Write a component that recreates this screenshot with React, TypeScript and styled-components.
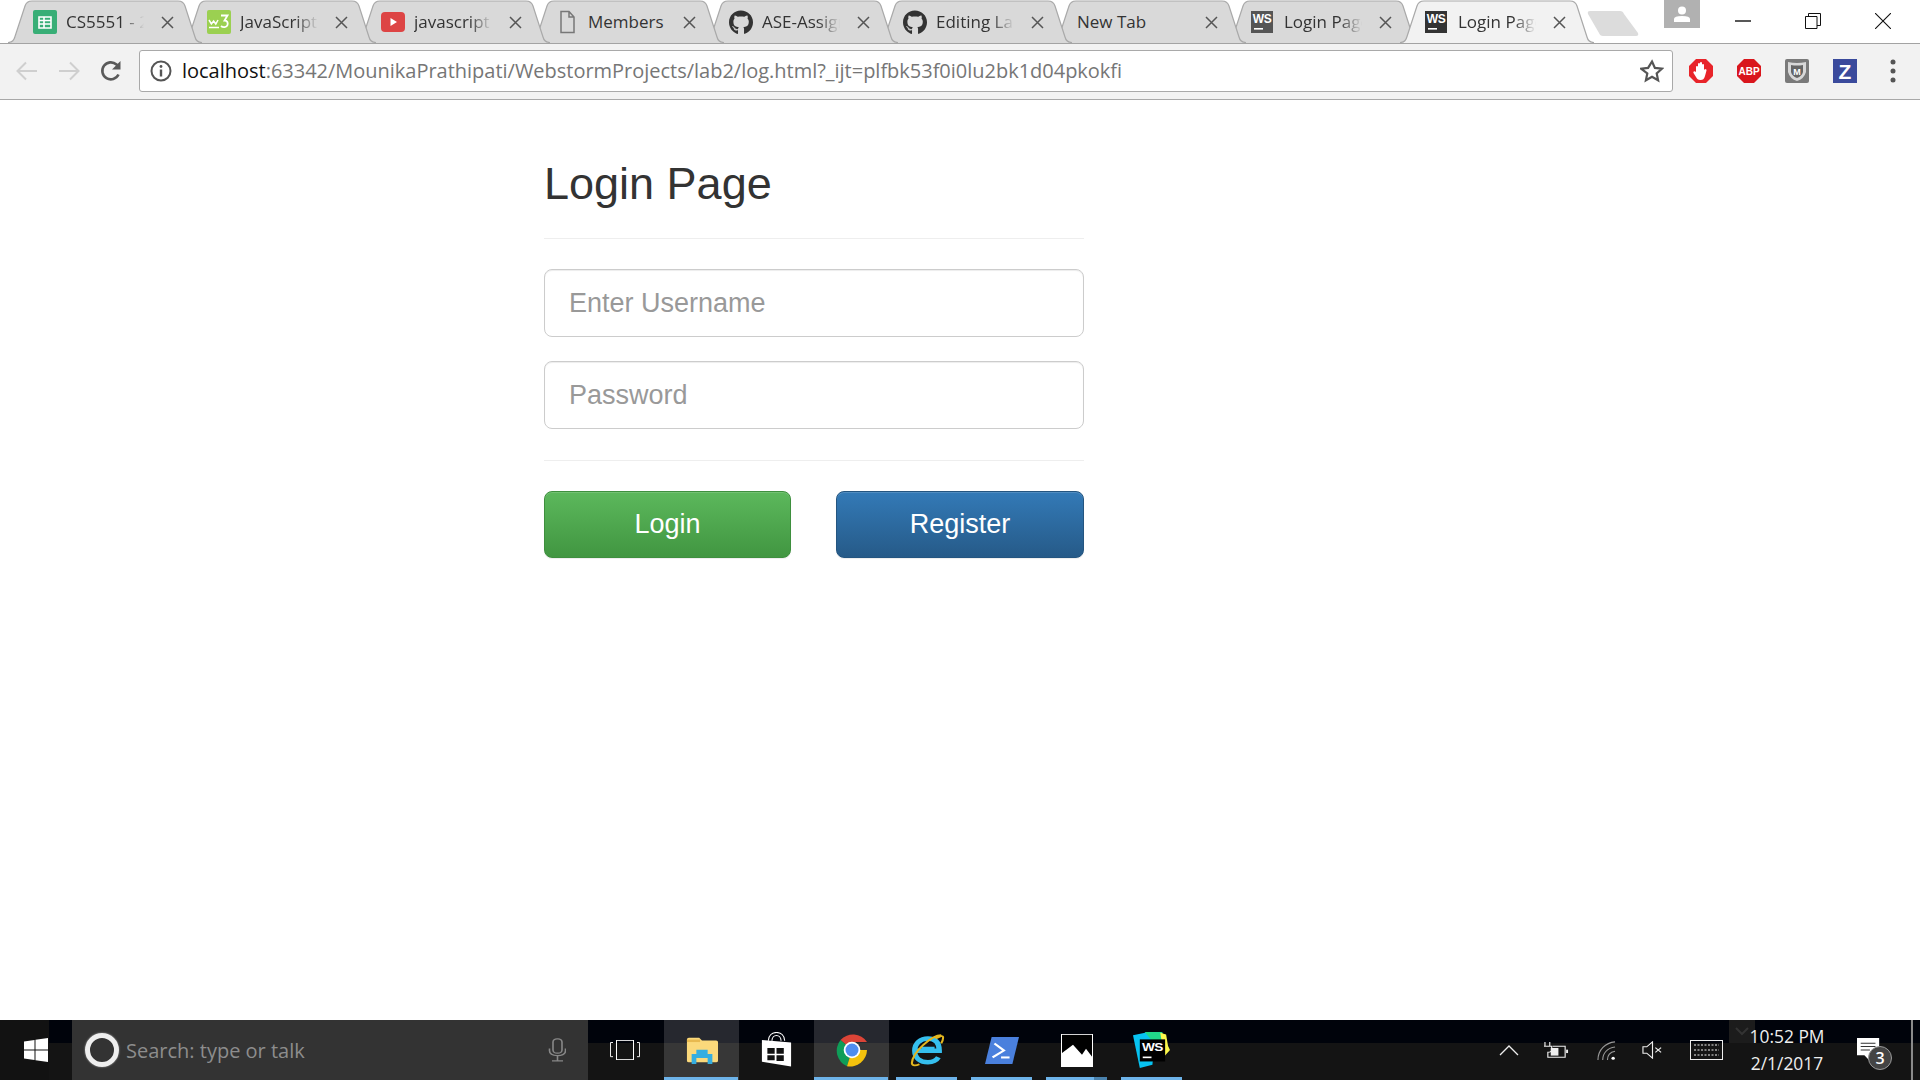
import React from 'react';
import styled, { createGlobalStyle } from 'styled-components';
import { FaGithub } from 'react-icons/fa';

const GlobalStyle = createGlobalStyle`
    html, body {
        margin: 0;
        padding: 0;
        background: #fff;
        overflow: hidden;
    }
    * { box-sizing: border-box; }
`;

const Screen = styled.div`
    width: 1920px;
    height: 1080px;
    display: flex;
    flex-direction: column;
    font-family: "Open Sans", "Liberation Sans", sans-serif;
`;

/* tab strip */

const TabStrip = styled.div`
    flex: 0 0 43px;
    display: flex;
    align-items: flex-start;
    padding-left: 8px;
    border-bottom: 1px solid #a3a3a3;
    background: #fff;
`;

const TabItem = styled.div<{ $order: number }>`
    position: relative;
    z-index: ${props => props.$order};
    flex: 0 0 174px;
    height: 43px;
    padding: 1px 0 0 25px;
    display: flex;
    align-items: center;
`;

const TabShape = styled.svg`
    position: absolute;
    left: 0;
    top: 0;
    z-index: -1;
`;

const Favicon = styled.span`
    flex: 0 0 24px;
    width: 24px;
    height: 24px;
    margin-right: 9px;
    display: flex;
    align-items: center;
`;

const TabTitle = styled.span<{ $fade?: boolean; $wide?: boolean }>`
    flex: 0 0 ${props => props.$wide ? '118px' : '85px'};
    margin-top: -2px;
    font-size: 17px;
    color: #333;
    white-space: nowrap;
    overflow: hidden;
    -webkit-mask-image: ${props => props.$fade ? 'linear-gradient(90deg, #000 65%, transparent 92%)' : 'none'};
    mask-image: ${props => props.$fade ? 'linear-gradient(90deg, #000 65%, transparent 92%)' : 'none'};
`;

const TabClose = styled.svg`
    flex: 0 0 13px;
    margin-left: 10px;
`;

const NewTabButton = styled.svg`
    flex: 0 0 52px;
    margin: 10px 0 0 13px;
`;

const ProfileBadge = styled.div`
    flex: 0 0 36px;
    height: 28px;
    margin-left: 25px;
    background: #b1b1b1;
    display: flex;
    align-items: center;
    justify-content: center;
`;

const WindowControls = styled.div`
    display: flex;
    margin-left: 8px;
`;

const WindowButton = styled.div`
    width: 70px;
    height: 42px;
    display: flex;
    align-items: center;
    justify-content: center;
`;

/* toolbar */

const Toolbar = styled.div`
    flex: 0 0 56px;
    display: flex;
    align-items: center;
    padding: 0 0 1px 6px;
    background: #f2f2f2;
    border-bottom: 1px solid #a8a8a8;
`;

const NavButton = styled.div`
    flex: 0 0 42px;
    display: flex;
    align-items: center;
    justify-content: center;
`;

const AddressBar = styled.div`
    flex: 0 0 1534px;
    height: 42px;
    margin-left: 7px;
    padding: 0 8px 0 10px;
    display: flex;
    align-items: center;
    background: #fff;
    border: 1px solid #a9a9a9;
    border-radius: 3px;
`;

const UrlText = styled.div`
    flex: 1;
    margin: -2px 0 0 10px;
    font-size: 20px;
    letter-spacing: -0.015px;
    color: #767676;
    white-space: nowrap;
`;

const UrlHost = styled.span`
    color: #111;
`;

const Extensions = styled.div`
    display: flex;
    margin-left: 4px;
`;

const ExtensionSlot = styled.div`
    width: 48px;
    display: flex;
    align-items: center;
    justify-content: center;
`;

/* login page */

const Main = styled.main`
    flex: 1;
    background: #fff;
`;

const LoginForm = styled.form`
    width: 540px;
    margin-left: 544px;
    font-family: "Liberation Sans", Arial, sans-serif;
`;

const Heading = styled.div`
    height: 139px;
    padding-top: 59px;
    border-bottom: 1px solid #eee;
`;

const Title = styled.h1`
    margin: 0;
    font-size: 45px;
    line-height: 50px;
    font-weight: 400;
    color: #333;
`;

const Fields = styled.div`
    display: flex;
    flex-direction: column;
    gap: 24px;
    padding: 30px 0 31px;
    border-bottom: 1px solid #eee;
`;

const TextInput = styled.input`
    width: 100%;
    height: 68px;
    padding: 0 24px;
    font-family: inherit;
    font-size: 27px;
    color: #555;
    background: #fff;
    border: 1px solid #ccc;
    border-radius: 8px;
    box-shadow: inset 0 1px 1px rgba(0, 0, 0, .075);

    &::placeholder {
        color: #999;
        opacity: 1;
    }
`;

const Actions = styled.div`
    display: flex;
    justify-content: space-between;
    padding-top: 30px;
`;

const ActionButton = styled.button<{ $kind: 'success' | 'primary' }>`
    width: ${props => props.$kind === 'success' ? '247px' : '248px'};
    height: 67px;
    font-family: inherit;
    font-size: 27px;
    color: #fff;
    border-radius: 8px;
    border: 1px solid ${props => props.$kind === 'success' ? '#3e8f3e' : '#245580'};
    background: ${props => props.$kind === 'success'
        ? 'linear-gradient(#5cb85c, #419641)'
        : 'linear-gradient(#337ab7, #265a88)'};
    box-shadow: inset 0 1px 0 rgba(255, 255, 255, .15), 0 1px 1px rgba(0, 0, 0, .075);
`;

/* taskbar */

const Taskbar = styled.footer`
    position: relative;
    flex: 0 0 60px;
    display: flex;
    align-items: center;
    background:
        linear-gradient(90deg, #121212 0 49px, transparent 49px),
        linear-gradient(#00030b 0 23px, #141414 23px);
`;

const StartButton = styled.div`
    flex: 0 0 72px;
    display: flex;
    justify-content: center;
`;

const SearchBox = styled.div`
    flex: 0 0 516px;
    height: 60px;
    padding: 0 22px 0 13px;
    display: flex;
    align-items: center;
    background: #333;
`;

const Cortana = styled.div`
    width: 34px;
    height: 34px;
    border: 5px solid #eee;
    border-radius: 50%;
    box-shadow: 0 0 2px #aaa;
`;

const SearchText = styled.div`
    flex: 1;
    margin-left: 7px;
    font-size: 20px;
    color: #8d8d8d;
`;

const TaskView = styled.div`
    flex: 0 0 76px;
    display: flex;
    justify-content: center;
    padding-right: 2px;
`;

const AppSlot = styled.div<{ $active?: boolean; $running?: boolean; $stacked?: boolean }>`
    position: relative;
    flex: 0 0 75px;
    height: 60px;
    display: flex;
    align-items: center;
    justify-content: center;
    background: ${props => props.$active ? 'rgba(255, 255, 255, .15)' : 'transparent'};

    &::after {
        content: '';
        display: ${props => props.$running ? 'block' : 'none'};
        position: absolute;
        bottom: 0;
        height: 3px;
        left: ${props => props.$active ? '0' : '7px'};
        right: ${props => props.$active ? '1px' : '7px'};
        background: ${props => props.$stacked
            ? 'linear-gradient(90deg, #6db3e9 78%, #4a82ad 78%)'
            : '#6db3e9'};
    }
`;

const Tray = styled.div`
    margin-left: auto;
    display: flex;
    align-items: center;
    height: 60px;
`;

const TraySlot = styled.div<{ $width: number }>`
    width: ${props => props.$width}px;
    display: flex;
    align-items: center;
    justify-content: center;
`;

const OverflowHint = styled.div`
    position: absolute;
    left: 1729px;
    top: 0;
    width: 26px;
    height: 23px;
    background: #1c1c1c;
    display: flex;
    align-items: center;
    justify-content: center;
`;

const Clock = styled.div`
    position: relative;
    z-index: 1;
    width: 86px;
    margin-left: 3px;
    display: flex;
    flex-direction: column;
    align-items: center;
    gap: 6px;
    font-size: 17.4px;
    line-height: 21px;
    color: #eee;
`;

const NotifyWrap = styled.div`
    position: relative;
    width: 78px;
    display: flex;
    justify-content: center;
`;

const NotifyBadge = styled.div`
    position: absolute;
    left: 38px;
    top: 8px;
    width: 24px;
    height: 24px;
    border-radius: 50%;
    background: #444;
    border: 1px solid #999;
    color: #fff;
    font-size: 16px;
    font-weight: 600;
    display: flex;
    align-items: center;
    justify-content: center;
`;

const ShowDesktop = styled.div`
    width: 2px;
    height: 60px;
    margin: 0 7px 0 3px;
    background: #8a8a8a;
`;

const SvgLabel = styled.text`
    font-family: "Liberation Sans", Arial, sans-serif;
    font-weight: 700;
`;

/* drawings */

const WsLogo: React.FC<{ bg?: string }> = ({ bg = '#333' }) => (
    <svg width="22" height="22" viewBox="0 0 22 22">
        <rect width="22" height="22" fill={bg}/>
        <SvgLabel x="11" y="12" fontSize="12" textAnchor="middle" fill="#fff" letterSpacing="-0.5">WS</SvgLabel>
        <rect x="3" y="17" width="9" height="1.600" fill="#fff"/>
    </svg>
);

const SheetsIcon = () => (
    <svg width="24" height="24" viewBox="0 0 24 24">
        <rect width="24" height="24" rx="2" fill="#38ae76"/>
        <path d="M6 7h12v11H6zM6 10.500h12M6 14h12M11 7v11" fill="none" stroke="#fff" strokeWidth="1.600"/>
    </svg>
);

const W3Icon = () => (
    <svg width="24" height="24" viewBox="0 0 24 24">
        <rect width="24" height="24" rx="2" fill="#9bd051"/>
        <path d="M2 10l2.400 4 2.200-3 2.200 3L11 10M2 17.500h10" fill="none" stroke="#fff" strokeWidth="1.500"/>
        <path d="M14 5.500h6.500l-3 5c3 0 3.600 2.500 3 4.500-.7 2.400-4.500 2.800-6.500 1" fill="none" stroke="#fff" strokeWidth="1.800"/>
    </svg>
);

const YoutubeIcon = () => (
    <svg width="24" height="24" viewBox="0 0 24 24">
        <rect y="2" width="24" height="20" rx="4" fill="#dd4444"/>
        <path d="M9.500 8l6.500 4-6.500 4z" fill="#fff"/>
    </svg>
);

const DocIcon = () => (
    <svg width="24" height="24" viewBox="0 0 24 24">
        <path d="M6 1.500h8l5 5.500v15.500H6z M14 1.500V7h5" fill="none" stroke="#777" strokeWidth="1.500"/>
    </svg>
);

const CloseGlyph = () => (
    <TabClose width="13" height="13" viewBox="0 0 13 13">
        <path d="M1 1l11 11M12 1L1 12" stroke="#555" strokeWidth="1.500"/>
    </TabClose>
);

const ChromeLogo = () => (
    <svg width="34" height="34" viewBox="0 0 34 34">
        <path d="M17 17L5.500 7A17 17 0 0 1 32 9H17z" fill="#db4437"/>
        <path d="M17 17L5.500 7A17 17 0 0 0 12 33.300z" fill="#0f9d58"/>
        <path d="M17 17h15A17 17 0 0 1 12 33.300z" fill="#f4c20d"/>
        <circle cx="17" cy="17" r="8.300" fill="#fff"/>
        <circle cx="17" cy="17" r="6.500" fill="#4f8df0"/>
    </svg>
);

const IeLogo = () => (
    <svg width="36" height="36" viewBox="0 0 38 44" preserveAspectRatio="none">
        <path d="M8 23h24c0-11-5-15-12-15-8 0-14 6-14 15s6 14 14 14c5 0 9-2 11-6" fill="none" stroke="#35bfee" strokeWidth="5.500"/>
        <path d="M13 19.500h14" stroke="#35bfee" strokeWidth="3"/>
        <path d="M34 4C24 4 4 24 3 38c0 4 5 3 8 1.500M28 8c4-2 8-5 8-1 0 2-1 5-2 7" fill="none" stroke="#e3b61f" strokeWidth="2.200"/>
    </svg>
);

const ExplorerLogo = () => (
    <svg width="32" height="27" viewBox="0 0 34 32" preserveAspectRatio="none">
        <path d="M1 3q0-2 2-2h11l3 3h15q2 0 2 2v22q0 2-2 2H3q-2 0-2-2z" fill="#fbd97b"/>
        <rect x="1" y="3" width="14" height="3" fill="#e8b94f"/>
        <path d="M6 32V20h5v-5h12v5h5v12h-5v-7H11v7z" fill="#35aee0"/>
    </svg>
);

const StoreLogo = () => (
    <svg width="31" height="37" viewBox="0 0 34 46" preserveAspectRatio="none">
        <path d="M8 11c0-14 18-14 18 0M12 11c0-9 10-9 10 0" fill="none" stroke="#fff" strokeWidth="1.200"/>
        <path d="M1 10l32 3v30l-32-6z" fill="#fff"/>
        <path d="M7 20h8v7H7zM17 20h8v7h-8zM7 29h8v6H7zM17 29h8v7h-8z" fill="#111"/>
    </svg>
);

const PowershellLogo = () => (
    <svg width="34" height="27" viewBox="0 0 36 33" preserveAspectRatio="none">
        <path d="M7 0h29l-7 33H0z" fill="#4a80dd"/>
        <path d="M10 8l10 8.500-12 8.500" fill="none" stroke="#fff" strokeWidth="2.500"/>
        <path d="M17 25h9" stroke="#fff" strokeWidth="2.500"/>
    </svg>
);

const PhotosLogo = () => (
    <svg width="32" height="33" viewBox="0 0 32 40" preserveAspectRatio="none">
        <rect x="0.500" y="0.500" width="31" height="39" fill="#000" stroke="#fff"/>
        <path d="M0 24l12-11 9 12 4-7 7 11v11H0z" fill="#fff"/>
    </svg>
);

const WebstormLogo = () => (
    <svg width="37" height="36" viewBox="0 0 38 44" preserveAspectRatio="none">
        <path d="M0 4l16-4 6 6-2 34-13 4z" fill="#07c3f2"/>
        <path d="M12 0h18l4 14-8 6z" fill="#21d789"/>
        <path d="M28 1l6 2 2 14 2 5-6 8z" fill="#fcf84a"/>
        <rect x="7" y="9" width="26" height="27" fill="#000"/>
        <SvgLabel x="20" y="23" fontSize="14" textAnchor="middle" fill="#fff" letterSpacing="-0.500">WS</SvgLabel>
        <rect x="10" y="30" width="9" height="2" fill="#fff"/>
    </svg>
);

type TabData = { title: string; icon: React.ReactNode; fade?: boolean };

const tabs: TabData[] = [
    { title: 'CS5551 - 2017', icon: <SheetsIcon/>, fade: true },
    { title: 'JavaScript tutorial', icon: <W3Icon/>, fade: true },
    { title: 'javascript tutorial', icon: <YoutubeIcon/>, fade: true },
    { title: 'Members', icon: <DocIcon/> },
    { title: 'ASE-Assignment', icon: <FaGithub size={25} color="#333"/>, fade: true },
    { title: 'Editing Lab', icon: <FaGithub size={25} color="#333"/>, fade: true },
    { title: 'New Tab', icon: null },
    { title: 'Login Page', icon: <WsLogo bg="#555"/>, fade: true },
    { title: 'Login Page', icon: <WsLogo/>, fade: true },
];

const Tab: React.FC<{ tab: TabData; index: number; active: boolean }> = ({ tab, index, active }) => (
    <TabItem $order={active ? 20 : 10 - index}>
        <TabShape width="194" height="43" viewBox="0 0 194 43">
            <path d="M0 43c4 0 6-2 7-6L17 6c1-3 3-5 7-5h146c4 0 6 2 7 5l10 31c1 4 3 6 7 6z"
                  fill={active ? '#f2f2f2' : '#d9d9d9'}/>
            <path d="M0 42.500c4 0 6-2 7-6L17 6c1-3 3-5 7-5h146c4 0 6 2 7 5l10 31c1 4 3 5.500 7 5.500"
                  fill="none" stroke="#a9a9a9" strokeWidth="1.200"/>
        </TabShape>
        {tab.icon ? <Favicon>{tab.icon}</Favicon> : null}
        <TabTitle $fade={tab.fade} $wide={!tab.icon}>{tab.title}</TabTitle>
        <CloseGlyph/>
    </TabItem>
);

export default function App() {
    return <Screen>
        <GlobalStyle/>
        <TabStrip>
            {tabs.map((tab, i) => <Tab key={i} tab={tab} index={i} active={i === tabs.length - 1}/>)}
            <NewTabButton width="52" height="26" viewBox="0 0 52 26">
                <path d="M3 1h30q3 0 4 3l14 19q1 3-2 3H16q-3 0-4-3L1 4q-1-3 2-3z" fill="#dcdcdc"/>
            </NewTabButton>
            <ProfileBadge>
                <svg width="18" height="16" viewBox="0 0 18 16">
                    <circle cx="9" cy="4.500" r="4" fill="#fff"/>
                    <path d="M1 16v-3q0-3 8-3t8 3v3z" fill="#fff"/>
                </svg>
            </ProfileBadge>
            <WindowControls>
                <WindowButton>
                    <svg width="16" height="2" viewBox="0 0 16 2"><path d="M0 1h16" stroke="#111" strokeWidth="1.400"/></svg>
                </WindowButton>
                <WindowButton>
                    <svg width="16" height="16" viewBox="0 0 16 16">
                        <path d="M.5 3.500h11.500v12H.5zM3.500 3.500V.5h12v12H12" fill="none" stroke="#111"/>
                    </svg>
                </WindowButton>
                <WindowButton>
                    <svg width="16" height="16" viewBox="0 0 16 16"><path d="M0 0l16 16M16 0L0 16" stroke="#111" strokeWidth="1.100"/></svg>
                </WindowButton>
            </WindowControls>
        </TabStrip>

        <Toolbar>
            <NavButton>
                <svg width="22" height="20" viewBox="0 0 22 20">
                    <path d="M21 10H2M10 1.500L1.500 10l8.500 8.500" fill="none" stroke="#cfcfcf" strokeWidth="2"/>
                </svg>
            </NavButton>
            <NavButton>
                <svg width="22" height="20" viewBox="0 0 22 20">
                    <path d="M1 10h19M12 1.500l8.500 8.500-8.500 8.500" fill="none" stroke="#cfcfcf" strokeWidth="2"/>
                </svg>
            </NavButton>
            <NavButton>
                <svg width="22" height="22" viewBox="0 0 22 22">
                    <path d="M18.500 14.500A8.500 8.500 0 1 1 16.500 4.500L19 7" fill="none" stroke="#5a5a5a" strokeWidth="2.600"/>
                    <path d="M20.500 1v8.500H12z" fill="#5a5a5a"/>
                </svg>
            </NavButton>
            <AddressBar>
                <svg width="22" height="22" viewBox="0 0 22 22">
                    <circle cx="11" cy="11" r="9.500" fill="none" stroke="#555" strokeWidth="2"/>
                    <path d="M11 9.500v7" stroke="#555" strokeWidth="2.400"/>
                    <circle cx="11" cy="6.500" r="1.400" fill="#555"/>
                </svg>
                <UrlText><UrlHost>localhost</UrlHost>:63342/MounikaPrathipati/WebstormProjects/lab2/log.html?_ijt=plfbk53f0i0lu2bk1d04pkokfi</UrlText>
                <svg width="24" height="24" viewBox="0 0 24 24">
                    <path d="M12 2.500l2.900 6.400 7 .8-5.200 4.700 1.400 6.900-6.100-3.500-6.100 3.500 1.400-6.900L1.100 9.700l7-.8z" fill="none" stroke="#555" strokeWidth="2.200"/>
                </svg>
            </AddressBar>
            <Extensions>
                <ExtensionSlot>
                    <svg width="24" height="24" viewBox="0 0 24 24">
                        <path d="M7 0h10l7 7v10l-7 7H7l-7-7V7z" fill="#e8242a"/>
                        <path d="M7 13V8a1 1 0 0 1 2 0v3V5a1 1 0 0 1 2 0v6V4a1 1 0 0 1 2 0v7V6a1 1 0 0 1 2 0v5l1-1q2 0 1.500 1.500L16 17c-1 3-2 4-4.500 4S8 20 7 18l-2.500-4c-.7-1.500 1-2.500 2.500-1z" fill="#fff"/>
                    </svg>
                </ExtensionSlot>
                <ExtensionSlot>
                    <svg width="24" height="24" viewBox="0 0 24 24">
                        <path d="M7 0h10l7 7v10l-7 7H7l-7-7V7z" fill="#d9161d"/>
                        <SvgLabel x="12" y="16" fontSize="10" textAnchor="middle" fill="#fff">ABP</SvgLabel>
                    </svg>
                </ExtensionSlot>
                <ExtensionSlot>
                    <svg width="24" height="24" viewBox="0 0 24 24">
                        <rect width="24" height="24" rx="2" fill="#7a7a7a"/>
                        <path d="M3 3q9 2 18 0v10q-2 7-9 9-7-2-9-9z" fill="#d8d8d8"/>
                        <path d="M6 6q6 1 12 0v7q-1 4-6 6-5-2-6-6z" fill="#666"/>
                        <SvgLabel x="12" y="15.500" fontSize="9" textAnchor="middle" fill="#fff">M</SvgLabel>
                    </svg>
                </ExtensionSlot>
                <ExtensionSlot>
                    <svg width="24" height="24" viewBox="0 0 24 24">
                        <rect width="24" height="24" fill="#3a4a9c"/>
                        <SvgLabel x="12" y="20" fontSize="21" textAnchor="middle" fill="#fff">Z</SvgLabel>
                    </svg>
                </ExtensionSlot>
                <ExtensionSlot>
                    <svg width="6" height="24" viewBox="0 0 6 24">
                        <circle cx="3" cy="3" r="2.500" fill="#555"/>
                        <circle cx="3" cy="12" r="2.500" fill="#555"/>
                        <circle cx="3" cy="21" r="2.500" fill="#555"/>
                    </svg>
                </ExtensionSlot>
            </Extensions>
        </Toolbar>

        <Main>
            <LoginForm>
                <Heading><Title>Login Page</Title></Heading>
                <Fields>
                    <TextInput type="text" placeholder="Enter Username"/>
                    <TextInput type="password" placeholder="Password"/>
                </Fields>
                <Actions>
                    <ActionButton type="button" $kind="success">Login</ActionButton>
                    <ActionButton type="button" $kind="primary">Register</ActionButton>
                </Actions>
            </LoginForm>
        </Main>

        <Taskbar>
            <StartButton>
                <svg width="24" height="24" viewBox="0 0 24 24">
                    <path d="M0 3.500l10.500-1.500v9.500H0zM11.500 1.800L24 0v11.500H11.500zM0 12.500h10.500V22L0 20.500zM11.500 12.500H24V24l-12.500-1.800z" fill="#fff"/>
                </svg>
            </StartButton>
            <SearchBox>
                <Cortana/>
                <SearchText>Search: type or talk</SearchText>
                <svg width="18" height="24" viewBox="0 0 18 30" preserveAspectRatio="none">
                    <rect x="5" y="1" width="9" height="18" rx="4" fill="none" stroke="#888" strokeWidth="1.600"/>
                    <path d="M1.500 13v3q0 6 8 6t8-6v-3M9.500 22v6M4 28.500h11" fill="none" stroke="#888" strokeWidth="1.600"/>
                </svg>
            </SearchBox>
            <TaskView>
                <svg width="30" height="20" viewBox="0 0 30 24" preserveAspectRatio="none">
                    <path d="M3 3H.5v17H3M27 3h2.500v17H27" fill="none" stroke="#fff"/>
                    <rect x="6.500" y="0.500" width="17" height="23" fill="none" stroke="#fff"/>
                </svg>
            </TaskView>
            <AppSlot $active $running><ExplorerLogo/></AppSlot>
            <AppSlot><StoreLogo/></AppSlot>
            <AppSlot $active $running><ChromeLogo/></AppSlot>
            <AppSlot $running><IeLogo/></AppSlot>
            <AppSlot $running><PowershellLogo/></AppSlot>
            <AppSlot $running $stacked><PhotosLogo/></AppSlot>
            <AppSlot $running><WebstormLogo/></AppSlot>
            <Tray>
                <TraySlot $width={48}>
                    <svg width="20" height="12" viewBox="0 0 20 12"><path d="M1 11l9-9 9 9" fill="none" stroke="#eee" strokeWidth="1.300"/></svg>
                </TraySlot>
                <TraySlot $width={46}>
                    <svg width="25" height="17" viewBox="0 0 26 20" preserveAspectRatio="none">
                        <path d="M1 0v5M6 0v5M0 5h8v4q0 3-4 3v6h18V5H9" fill="none" stroke="#eee" strokeWidth="1.200"/>
                        <rect x="7" y="7" width="8" height="9" fill="#eee"/>
                        <rect x="23" y="9" width="2" height="4" fill="#eee"/>
                    </svg>
                </TraySlot>
                <TraySlot $width={54}>
                    <svg width="19" height="19" viewBox="0 0 20 22" preserveAspectRatio="none">
                        <path d="M1 22C1 10 9 2 19 1M6 22c0-8 5-14 13-15M11 22c0-5 3-9 8-10" fill="none" stroke="#999" strokeWidth="1.200"/>
                        <circle cx="17" cy="20" r="1.800" fill="#fff"/>
                    </svg>
                </TraySlot>
                <TraySlot $width={38}>
                    <svg width="21" height="18" viewBox="0 0 22 22" preserveAspectRatio="none">
                        <path d="M1 7h4l6-6v20l-6-6H1z" fill="none" stroke="#eee" strokeWidth="1.200"/>
                        <path d="M14 8l6 6M20 8l-6 6" stroke="#eee" strokeWidth="1.200"/>
                    </svg>
                </TraySlot>
                <TraySlot $width={70}>
                    <svg width="33" height="20" viewBox="0 0 33 20">
                        <rect x="0.500" y="0.500" width="32" height="19" fill="none" stroke="#eee"/>
                        <path d="M4 5h25M4 10h25M4 15h25" stroke="#eee" strokeDasharray="2 1.500"/>
                    </svg>
                </TraySlot>
                <Clock>
                    <span>10:52 PM</span>
                    <span>2/1/2017</span>
                </Clock>
                <NotifyWrap>
                    <svg width="24" height="24" viewBox="0 0 26 28" preserveAspectRatio="none">
                        <path d="M0 0h24v20h-8l-1 8-7-8H0z" fill="#fff"/>
                        <path d="M4 6h16M4 10h16M4 14h10" stroke="#333" strokeWidth="1.200"/>
                    </svg>
                    <NotifyBadge>3</NotifyBadge>
                </NotifyWrap>
                <ShowDesktop/>
            </Tray>
            <OverflowHint>
                <svg width="14" height="9" viewBox="0 0 14 9"><path d="M1 1l6 6 6-6" fill="none" stroke="#333" strokeWidth="2"/></svg>
            </OverflowHint>
        </Taskbar>
    </Screen>;
}
